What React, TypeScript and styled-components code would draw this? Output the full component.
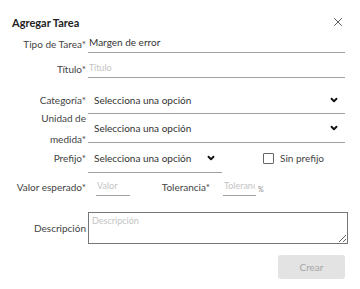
import React from 'react';
import styled, {createGlobalStyle} from 'styled-components';
import {X, ChevronDown} from 'lucide-react';

const GlobalStyle = createGlobalStyle`
  body {
    margin: 0;
    background: #fff;
    font-family: "Lato", "Noto Sans", sans-serif;
    color: #333;
  }
`

const Modal = styled.div`
  width: 360px;
  box-sizing: border-box;
  padding: 14px 15px 0 12px;
`

const Header = styled.div`
  display: flex;
  align-items: center;
  justify-content: space-between;
  height: 16px;
`

const Title = styled.div`
  font-size: 11px;
  font-weight: 700;
  color: #222;
`

const CloseButton = styled.button`
  border: none;
  background: none;
  padding: 0;
  display: flex;
  color: #333;
  cursor: pointer;
`

const Row = styled.div<{ height: number, mt?: number }>`
  display: flex;
  align-items: center;
  height: ${p => p.height}px;
  margin-top: ${p => p.mt || 0}px;
`

const Label = styled.div<{ width?: number }>`
  width: ${p => p.width || 74}px;
  flex-shrink: 0;
  text-align: right;
  font-size: 10px;
  color: #444;
  line-height: 21px;
  padding-right: 2px;
`

const Input = styled.input<{ width?: number, offset?: number }>`
  box-sizing: border-box;
  width: ${p => p.width ? p.width + 'px' : '100%'};
  flex: ${p => p.width ? 'none' : '1'};
  margin-left: ${p => p.offset || 0}px;
  height: 18px;
  border: none;
  border-bottom: 1px solid #a0a0a0;
  outline: none;
  padding: 0 1px 4px;
  font-family: inherit;
  font-size: 10px;
  color: #333;
  background: transparent;

  &::placeholder {
    color: #c4c4c4;
    font-size: 9px;
  }
`

const Select = styled.div<{ width?: number }>`
  box-sizing: border-box;
  display: flex;
  align-items: center;
  justify-content: space-between;
  width: ${p => p.width ? p.width + 'px' : 'auto'};
  flex: ${p => p.width ? 'none' : '1'};
  height: 100%;
  padding: 0 6px;
  border-bottom: 1px solid #a0a0a0;
  font-size: 10px;
  color: #333;
`

const CheckWrap = styled.label`
  display: flex;
  align-items: center;
  gap: 6px;
  margin-left: 41px;
  font-size: 10px;
  color: #444;
`

const Box = styled.span`
  width: 9px;
  height: 9px;
  border: 1px solid #666;
  border-radius: 1px;
`

const Unit = styled.span`
  font-size: 7px;
  color: #888;
  margin-left: 2px;
  margin-top: 4px;
`

const TextArea = styled.textarea`
  box-sizing: border-box;
  flex: 1;
  height: 32px;
  margin-right: -3px;
  border: 1px solid #767676;
  padding: 2px 3px;
  font-family: inherit;
  font-size: 10px;
  outline: none;
  resize: vertical;

  &::placeholder {
    color: #c4c4c4;
    font-size: 9px;
  }
`

const Footer = styled.div`
  display: flex;
  justify-content: flex-end;
  margin-top: 11px;
`

const CreateButton = styled.button`
  width: 67px;
  height: 24px;
  border: none;
  border-radius: 3px;
  background: #e3e3e3;
  color: #a6a6a6;
  font-family: inherit;
  font-size: 10px;
`

const Chevron = () => <ChevronDown size={10} strokeWidth={4.5} color={'#111'}/>

const App = () => {
  return (
    <Modal>
      <GlobalStyle/>
      <Header>
        <Title>Agregar Tarea</Title>
        <CloseButton><X size={14} strokeWidth={1.4}/></CloseButton>
      </Header>
      <Row height={18} mt={5}>
        <Label>Tipo de Tarea*</Label>
        <Input defaultValue={'Margen de error'}/>
      </Row>
      <Row height={18} mt={7}>
        <Label>Título*</Label>
        <Input placeholder={'Título'}/>
      </Row>
      <Row height={28} mt={8}>
        <Label>Categoría*</Label>
        <Select>Selecciona una opción <Chevron/></Select>
      </Row>
      <Row height={29}>
        <Label>Unidad de medida*</Label>
        <Select>Selecciona una opción <Chevron/></Select>
      </Row>
      <Row height={30}>
        <Label>Prefijo*</Label>
        <Select width={134}>Selecciona una opción <Chevron/></Select>
        <CheckWrap><Box/>Sin prefijo</CheckWrap>
      </Row>
      <Row height={18} mt={5}>
        <Label>Valor esperado*</Label>
        <Input width={34} offset={8} placeholder={'Valor'}/>
        <Label width={80}>Tolerancia*</Label>
        <Input width={33} offset={11} placeholder={'Tolerancia'}/>
        <Unit>%</Unit>
      </Row>
      <Row height={32} mt={16}>
        <Label>Descripción</Label>
        <TextArea placeholder={'Descripción'}/>
      </Row>
      <Footer>
        <CreateButton>Crear</CreateButton>
      </Footer>
    </Modal>
  );
};

export default App;
